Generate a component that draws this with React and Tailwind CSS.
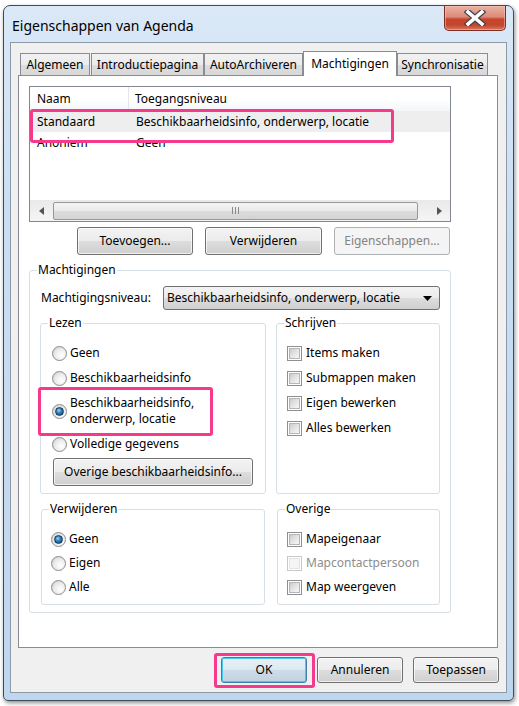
import React from "react";

const pink = "border-[3px] border-[#f53a8c] rounded-[3px]";

function Btn({ children, className = "", disabled, primary }) {
  let look =
    "border-[#707070] text-black bg-[linear-gradient(#f3f3f3_0%,#ebebeb_50%,#dddddd_51%,#cfcfcf_100%)] shadow-[inset_0_0_0_1px_rgba(255,255,255,0.7)]";
  if (disabled) look = "border-[#adb2b5] text-[#838383] bg-[#f4f4f4]";
  if (primary)
    look =
      "border-[#3c7fb1] text-black bg-[linear-gradient(#e9f1f6_0%,#dde8f0_50%,#cddce7_51%,#c0d3e1_100%)] shadow-[inset_0_0_0_1px_#48c8f3]";
  return (
    <div className={`flex items-center justify-center rounded-[3px] border ${look} ${className}`}>
      {children}
    </div>
  );
}

function Radio({ checked }) {
  return (
    <span className="flex h-[15px] w-[15px] shrink-0 items-center justify-center rounded-full border border-[#8b8b8b] bg-[radial-gradient(circle_at_65%_65%,#ffffff_0%,#ececec_50%,#c6c6c6_100%)]">
      {checked && (
        <span className="h-[9px] w-[9px] rounded-full border border-[#17374f] bg-[radial-gradient(circle_at_40%_35%,#9fd8f5_0%,#2a82c2_40%,#0c4070_100%)]" />
      )}
    </span>
  );
}

function Check({ disabled }) {
  return (
    <span
      className={`flex h-[15px] w-[15px] shrink-0 items-center justify-center border bg-white ${
        disabled ? "border-[#c9c9c9]" : "border-[#8e8f8f]"
      }`}
    >
      <span
        className={`h-[11px] w-[11px] border ${
          disabled
            ? "border-[#e4e4e4] bg-[#f5f5f5]"
            : "border-[#b3b6ba] bg-[linear-gradient(135deg,#cbcbcb_0%,#e4e4e4_50%,#f6f6f6_100%)]"
        }`}
      />
    </span>
  );
}

function RadioRow({ label, checked }) {
  return (
    <div className="flex h-[16px] items-center gap-[3px]">
      <Radio checked={checked} />
      <span className="leading-[16px]">{label}</span>
    </div>
  );
}

function CheckRow({ label, disabled }) {
  return (
    <div className="flex h-[16px] items-center gap-[4px]">
      <Check disabled={disabled} />
      <span className={`leading-[16px] ${disabled ? "text-[#8d8d8d]" : ""}`}>{label}</span>
    </div>
  );
}

function Group({ label, className = "", children }) {
  return (
    <fieldset className={`rounded-[3px] border border-[#d5dfe5] ${className}`}>
      <legend className="ml-[7px] px-[1px] leading-[16px]">{label}</legend>
      {children}
    </fieldset>
  );
}

function Tab({ children, active, className = "" }) {
  if (active)
    return (
      <div
        className={`relative z-10 -mb-px flex h-[25px] items-start justify-center border border-b-0 border-[#898c95] bg-white pt-[3px] ${className}`}
      >
        {children}
      </div>
    );
  return (
    <div
      className={`flex h-[22px] items-center justify-center border border-b-0 border-[#898c95] bg-[linear-gradient(#f2f2f2_0%,#ebebeb_50%,#dddddd_51%,#d8d8d8_100%)] ${className}`}
    >
      {children}
    </div>
  );
}

function CloseBtn() {
  return (
    <div className="mr-[7px] flex h-[25px] w-[62px] items-center justify-center rounded-b-[5px] border border-t-0 border-[#7a2e25] bg-[linear-gradient(#eab1a3_0%,#dc8b79_45%,#c8442c_55%,#c3472f_80%,#d77a5c_100%)] shadow-[inset_0_0_0_1px_rgba(255,200,190,0.5)]">
      <svg width="22" height="16" viewBox="0 0 22 16">
        <path d="M4 2 L18 14 M18 2 L4 14" stroke="#3d434c" strokeWidth="6" strokeLinecap="square" />
        <path d="M4 2 L18 14 M18 2 L4 14" stroke="#ffffff" strokeWidth="3.6" strokeLinecap="square" />
      </svg>
    </div>
  );
}

function ListView() {
  return (
    <div className="relative flex h-[136px] w-[422px] flex-col border border-[#828790] bg-white">
      <div className="flex h-[24px] items-center bg-[linear-gradient(#ffffff_0%,#ffffff_55%,#f4f5f7_100%)]">
        <div className="flex h-full w-[99px] items-center border-r border-[#e3e5e8] pl-[7px]">Naam</div>
        <div className="pl-[6px]">Toegangsniveau</div>
      </div>
      <div className="flex h-[21px] items-center bg-[#eeeeee] pt-px">
        <div className="w-[99px] pl-[7px]">Standaard</div>
        <div className="pl-[7px]">Beschikbaarheidsinfo, onderwerp, locatie</div>
      </div>
      <div className="flex h-[21px] items-center pt-px">
        <div className="w-[99px] pl-[7px]">Anoniem</div>
        <div className="pl-[7px]">Geen</div>
      </div>
      <div className="flex-1" />
      <div className="flex h-[21px] items-center bg-[linear-gradient(#e9e9e9,#f5f5f5)]">
        <div className="flex h-full w-[23px] items-center justify-center">
          <svg width="5" height="8" viewBox="0 0 5 8">
            <path d="M5 0 L0 4 L5 8 Z" fill="#555" />
          </svg>
        </div>
        <div className="flex h-[18px] w-[365px] items-center justify-center gap-[2px] rounded-[2px] border border-[#979797] bg-[linear-gradient(#f4f4f4_0%,#e9e9e9_50%,#dcdcdc_51%,#d3d3d3_100%)]">
          <span className="h-[7px] w-px bg-[#8a8a8a]" />
          <span className="h-[7px] w-px bg-[#8a8a8a]" />
          <span className="h-[7px] w-px bg-[#8a8a8a]" />
        </div>
        <div className="flex-1" />
        <div className="flex h-full w-[22px] items-center justify-center">
          <svg width="5" height="8" viewBox="0 0 5 8">
            <path d="M0 0 L5 4 L0 8 Z" fill="#555" />
          </svg>
        </div>
      </div>
      <div className={`absolute left-0 top-[22px] h-[34px] w-[364px] ${pink}`} />
    </div>
  );
}

export default function App() {
  return (
    <div className="h-[706px] w-[519px] bg-white pl-[3px] pt-[5px] font-['Noto_Sans',sans-serif] text-[12px] text-black">
      <div className="flex h-[696px] w-[511px] flex-col rounded-t-[7px] rounded-b-[5px] border border-[#3e4b58] bg-[linear-gradient(180deg,#dae8f7_0%,#cadef3_30%,#bfd6ef_100%)] shadow-[1px_2px_4px_rgba(0,0,0,0.45)]">
        <div className="flex h-[36px] items-start justify-between">
          <div className="ml-[8px] mt-[10px] text-[14px] leading-[20px]">Eigenschappen van Agenda</div>
          <CloseBtn />
        </div>

        <div className="ml-[6px] flex h-[651px] w-[497px] flex-col border border-[#8d99a6] bg-[#f0f0f0]">
          <div className="ml-[7px] mt-[8px] flex flex-col">
            <div className="flex items-end pl-[2px]">
              <Tab className="w-[70px]">Algemeen</Tab>
              <Tab className="ml-[1px] w-[113px]">Introductiepagina</Tab>
              <Tab className="w-[99px]">AutoArchiveren</Tab>
              <Tab active className="w-[94px]">Machtigingen</Tab>
              <Tab className="w-[91px]">Synchronisatie</Tab>
            </div>

            <div className="relative h-[573px] w-[480px] border border-[#898c95] bg-white pl-[10px] pt-[10px]">
              <ListView />

              <div className="mt-[5px] flex w-[421px] justify-end gap-[12px]">
                <Btn className="h-[28px] w-[116px]">Toevoegen...</Btn>
                <Btn className="h-[28px] w-[117px]">Verwijderen</Btn>
                <Btn disabled className="h-[28px] w-[116px]">Eigenschappen...</Btn>
              </div>

              <Group label="Machtigingen" className="mt-[7px] w-[422px] pb-[7px]">
                <div className="mt-[8px] flex h-[24px] items-center pl-[11px]">
                  <span className="w-[122px]">Machtigingsniveau:</span>
                  <div className="flex h-[24px] w-[277px] items-center justify-between rounded-[3px] border border-[#707070] bg-[linear-gradient(#f3f3f3_0%,#ebebeb_50%,#dddddd_51%,#cfcfcf_100%)] pl-[3px] pr-[7px]">
                    <span>Beschikbaarheidsinfo, onderwerp, locatie</span>
                    <svg width="9" height="5" viewBox="0 0 9 5">
                      <path d="M0 0 L9 0 L4.5 5 Z" fill="#000" />
                    </svg>
                  </div>
                </div>

                <div className="mt-[5px] flex gap-[10px] pl-[10px]">
                  <Group label="Lezen" className="h-[179px] w-[226px]">
                    <div className="mt-[14px] flex flex-col gap-[9px] pl-[11px]">
                      <RadioRow label="Geen" />
                      <RadioRow label="Beschikbaarheidsinfo" />
                      <div className="relative flex items-center gap-[3px]">
                        <Radio checked />
                        <span className="leading-[16px]">
                          Beschikbaarheidsinfo,
                          <br />
                          onderwerp, locatie
                        </span>
                        <div className={`absolute -left-[14px] -top-[8px] h-[49px] w-[175px] ${pink}`} />
                      </div>
                      <RadioRow label="Volledige gegevens" />
                    </div>
                    <Btn className="ml-[12px] mt-[6px] h-[28px] w-[200px]">Overige beschikbaarheidsinfo...</Btn>
                  </Group>

                  <Group label="Schrijven" className="h-[179px] w-[164px]">
                    <div className="mt-[14px] flex flex-col gap-[9px] pl-[10px]">
                      <CheckRow label="Items maken" />
                      <CheckRow label="Submappen maken" />
                      <CheckRow label="Eigen bewerken" />
                      <CheckRow label="Alles bewerken" />
                    </div>
                  </Group>
                </div>

                <div className="mt-[7px] flex gap-[12px] pl-[11px]">
                  <Group label="Verwijderen" className="h-[104px] w-[224px]">
                    <div className="mt-[14px] flex flex-col gap-[8px] pl-[9px]">
                      <RadioRow label="Geen" checked />
                      <RadioRow label="Eigen" />
                      <RadioRow label="Alle" />
                    </div>
                  </Group>
                  <Group label="Overige" className="h-[104px] w-[163px]">
                    <div className="mt-[14px] flex flex-col gap-[8px] pl-[9px]">
                      <CheckRow label="Mapeigenaar" />
                      <CheckRow label="Mapcontactpersoon" disabled />
                      <CheckRow label="Map weergeven" />
                    </div>
                  </Group>
                </div>
              </Group>
            </div>
          </div>

          <div className="mt-[9px] flex justify-end gap-[10px] pr-[7px]">
            <div className="relative">
              <Btn primary className="h-[26px] w-[86px]">OK</Btn>
              <div className={`absolute -bottom-[5px] -left-[7px] -right-[8px] -top-[4px] ${pink}`} />
            </div>
            <Btn className="h-[26px] w-[86px]">Annuleren</Btn>
            <Btn className="h-[26px] w-[86px]">Toepassen</Btn>
          </div>
        </div>
      </div>
    </div>
  );
}
